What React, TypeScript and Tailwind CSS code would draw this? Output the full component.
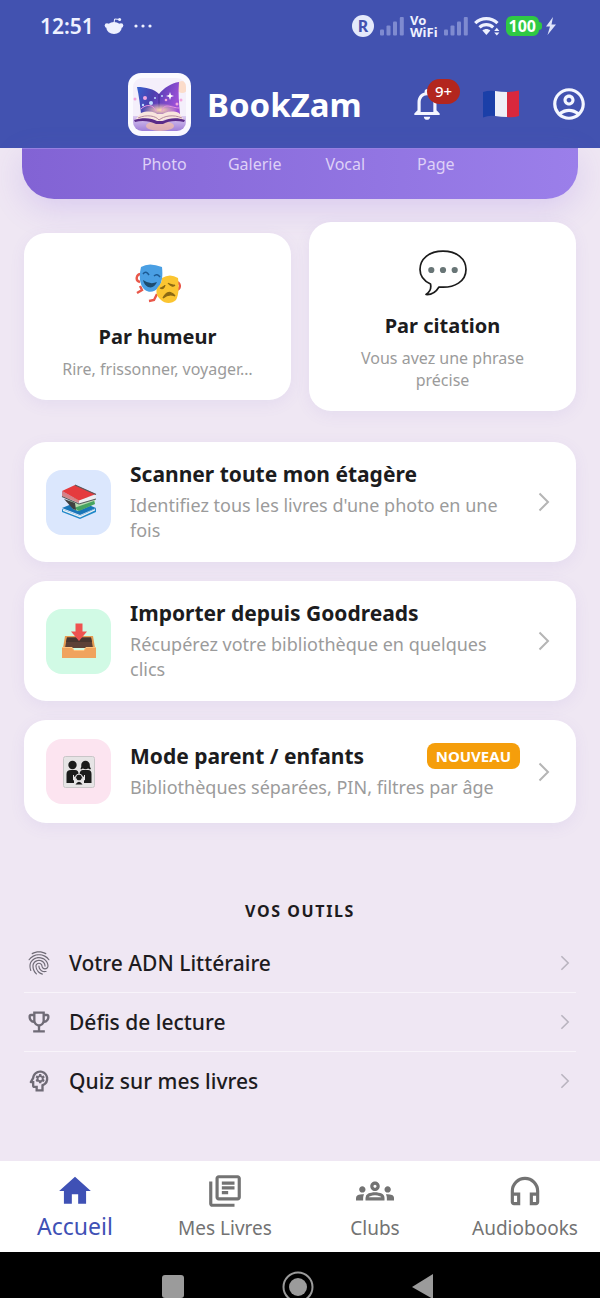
import type { ReactNode } from "react";
import {
  MdFingerprint,
  MdHome,
  MdOutlineAccountCircle,
  MdOutlineEmojiEvents,
  MdOutlineGroups,
  MdOutlineHeadphones,
  MdOutlineLibraryBooks,
  MdOutlineNotifications,
  MdOutlinePsychology,
} from "react-icons/md";

function RedditIcon() {
  return (
    <svg viewBox="0 0 20 18" className="h-[18px] w-5" aria-hidden="true">
      <ellipse cx="10" cy="11" rx="7.6" ry="6" fill="#eef1ff" />
      <circle cx="3" cy="8.6" r="2.3" fill="#eef1ff" />
      <circle cx="17" cy="8.6" r="2.3" fill="#eef1ff" />
      <path d="M10 6 L10.6 2 L15 2.4" fill="none" stroke="#eef1ff" strokeWidth="1" />
      <circle cx="15.6" cy="2.4" r="1.5" fill="#eef1ff" />
    </svg>
  );
}

function SignalBars() {
  return (
    <svg viewBox="0 0 24 20" className="h-5 w-6" fill="#7f8bd0" aria-hidden="true">
      <rect x="0" y="13.500" width="4" height="6" rx="1" />
      <rect x="6.500" y="9.500" width="4" height="10" rx="1" />
      <rect x="13" y="5.500" width="4" height="14" rx="1" />
      <rect x="19.800" y="1" width="4" height="18.500" rx="1" />
    </svg>
  );
}

function WifiIcon() {
  return (
    <svg viewBox="0 0 26 20" className="h-5 w-[26px]" aria-hidden="true">
      <g fill="none" stroke="#eef1ff" strokeWidth="3.200">
        <path d="M1.200 7.200 C7.500 1 17 1 23.500 7.200" />
        <path d="M5.500 11.400 C9.500 7.600 15.200 7.600 19.200 11.400" />
      </g>
      <path d="M8.400 14.600 C10.800 12.600 14 12.600 16.300 14.600 L12.400 19 Z" fill="#eef1ff" />
      <path d="M20.200 15 L22.800 11.800 L25.400 15 Z M20.200 16.500 L22.800 19.600 L25.400 16.500 Z" fill="#eef1ff" />
    </svg>
  );
}

function BatteryBadge() {
  return (
    <span className="flex items-center">
      <span className="flex h-5 items-center rounded-md bg-[#2fc944] px-[3px] text-base leading-none font-bold text-white">
        100
      </span>
      <span className="h-2 w-[3px] rounded-r-sm bg-[#2fc944]" />
      <svg viewBox="0 0 10 18" className="ml-1 h-[18px] w-2.5" aria-hidden="true">
        <path d="M7 0 L0 9.500 H4 L1.500 18 L10 7.500 H5.500 Z" fill="#dfe4fa" />
      </svg>
    </span>
  );
}

function StatusBar() {
  return (
    <div className="flex h-[52px] items-center justify-between pr-11 pl-10 text-[#eef1ff]">
      <div className="flex items-center gap-2.5">
        <span className="text-[21px] leading-6 font-semibold">12:51</span>
        <RedditIcon />
        <svg viewBox="0 0 18 4" className="h-1 w-[18px]" fill="#eef1ff" aria-hidden="true">
          <circle cx="2" cy="2" r="1.600" />
          <circle cx="9" cy="2" r="1.600" />
          <circle cx="16" cy="2" r="1.600" />
        </svg>
      </div>
      <div className="flex items-center gap-1.5">
        <span className="flex size-[22px] items-center justify-center rounded-full bg-[#e4e9fb] text-base leading-none font-bold text-[#4252b0]">
          R
        </span>
        <SignalBars />
        <span className="flex flex-col text-[13px] leading-3 font-bold">
          <span>Vo</span>
          <span>WiFi</span>
        </span>
        <SignalBars />
        <WifiIcon />
        <BatteryBadge />
      </div>
    </div>
  );
}

function BookLogo() {
  return (
    <span className="block size-[63px] rounded-[13px] bg-[#fbfaff] p-[5px]">
      <svg viewBox="0 0 53 53" className="size-full" aria-hidden="true">
        <defs>
          <linearGradient id="cover" x1="0" x2="1" y1="0" y2="0.300">
            <stop offset="0" stopColor="#3565d2" />
            <stop offset="0.450" stopColor="#4c3fae" />
            <stop offset="0.550" stopColor="#5c40b8" />
            <stop offset="1" stopColor="#9a4fd6" />
          </linearGradient>
          <linearGradient id="table" x1="0" x2="0" y1="0" y2="1">
            <stop offset="0" stopColor="#dccbf0" />
            <stop offset="1" stopColor="#a07fd8" />
          </linearGradient>
          <radialGradient id="glow">
            <stop offset="0" stopColor="#ffd9b0" />
            <stop offset="1" stopColor="#ffd9b0" stopOpacity="0" />
          </radialGradient>
          <clipPath id="tile">
            <rect width="53" height="53" rx="9" />
          </clipPath>
        </defs>
        <g clipPath="url(#tile)">
          <rect width="53" height="53" fill="#f4effb" />
          <circle cx="49" cy="9" r="6" fill="#fbdccb" />
          <rect y="38" width="53" height="15" fill="url(#table)" />
          <ellipse cx="27" cy="48" rx="14" ry="5" fill="#f6bfa5" opacity="0.700" />
          <path d="M4 9 C13 9 21 11 26 16 C31 10 38 5 46 4 C45 15 46 25 47 36 H8 C7 27 6 18 4 9Z" fill="url(#cover)" />
          <path d="M26 16 V34" stroke="#332b88" strokeWidth="0.800" />
          <ellipse cx="27" cy="32" rx="18" ry="7" fill="url(#glow)" />
          <path d="M8 31 C13 26 20 26 23 33 M46 30 C39 30 31 24 29 33" fill="none" stroke="#e894e0" strokeWidth="1" />
          <g fill="#f2a5df">
            <circle cx="12" cy="20" r="2" />
            <circle cx="44" cy="26" r="1.500" />
            <circle cx="33" cy="22" r="1.300" />
            <circle cx="2" cy="21" r="1.500" />
            <circle cx="48" cy="22" r="1.500" />
          </g>
          <g fill="#bcdcff">
            <circle cx="18" cy="25" r="2" />
            <circle cx="10" cy="27" r="1.200" />
            <circle cx="22" cy="20" r="1" />
            <circle cx="29" cy="18" r="1" />
          </g>
          <path d="M37 14 L38 17 L41 18 L38 19 L37 22 L36 19 L33 18 L36 17Z" fill="#fff" />
          <path d="M2 42 L8 35 C16 32 23 34 27 38 C31 34 39 32 46 35 L51 42 C43 40 34 40 29 43 H24 C18 40 10 40 2 42Z" fill="#f8e5dd" />
          <path d="M5 40 C14 36 23 38 26 42 C31 38 40 36 49 40" fill="none" stroke="#b58a9f" strokeWidth="1" />
          <path d="M1 42 C10 39 19 40 24 43 H30 C36 40 44 39 52 42 L51 44 C43 42 35 43 30 46 H23 C17 43 9 42 2 44Z" fill="#5a2b88" />
        </g>
      </svg>
    </span>
  );
}

function FrenchFlag() {
  return (
    <svg viewBox="0 0 38 28" className="h-7 w-[38px]" aria-hidden="true">
      <path d="M1 2 Q7 0 13 1 V26 Q7 25 1 27.500Z" fill="#1b3fa8" />
      <path d="M13 1 Q19 2 25 2 V27 Q19 27 13 26Z" fill="#eef0f8" />
      <path d="M25 2 Q31 2 37 .5 V26 Q31 28 25 27Z" fill="#d8283d" />
    </svg>
  );
}

function Header() {
  return (
    <header className="h-[148px] bg-[#4252b0]">
      <StatusBar />
      <div className="flex h-[104px] items-center justify-between pr-3 pl-32">
        <a href="#accueil" className="flex items-center gap-4">
          <BookLogo />
          <h1 className="text-[33px] leading-none font-bold text-white">BookZam</h1>
        </a>
        <div className="flex items-center gap-[30px]">
          <button type="button" aria-label="Notifications" className="relative mr-1.5 text-[#f4f6ff]">
            <MdOutlineNotifications className="size-[38px]" />
            <span className="absolute -top-1.5 left-[19px] flex h-[25px] w-[33px] items-center justify-center rounded-full bg-[#b3261e] text-[15px] leading-none font-medium text-white">
              9+
            </span>
          </button>
          <button type="button" aria-label="Français">
            <FrenchFlag />
          </button>
          <button type="button" aria-label="Compte" className="text-[#f4f6ff]">
            <MdOutlineAccountCircle className="size-[38px]" />
          </button>
        </div>
      </div>
    </header>
  );
}

function MasksArt() {
  return (
    <svg viewBox="0 0 46 40" className="h-10 w-[46px]" aria-hidden="true">
      <path d="M6 10 C1 10 0 17 5 18 M5 22 L7 26 L2 29 M40 18 C46 18 46 24 42 26 M22 30 L19 36 L14 37" fill="none" stroke="#e9584a" strokeWidth="2.400" />
      <path d="M6 3 Q14 -2 27 3 C28 12 27 20 23 24 C20 28 14 29 10 26 C4 21 4 11 6 3Z" fill="#4a9fe3" />
      <path d="M8 10 Q11 6 14 11 M19 12 Q22 9 25 13" fill="none" stroke="#1c5a93" strokeWidth="1.500" />
      <path d="M8 16 Q15 21 22 18 Q19 25 13 23 Q9 21 8 16Z" fill="#1d4c70" />
      <path d="M27 14 Q35 9 43 14 C44 22 44 31 41 36 C37 40 30 40 26 36 C20 31 21 25 23 23 C26 20 27 17 27 14Z" fill="#fbc531" />
      <path d="M25 24 Q29 26 30 21 M33 19 Q37 24 40 21 M28 34 Q33 24 40 32 Q34 29 28 34Z" fill="#8b6914" stroke="#8b6914" strokeWidth="1.200" />
    </svg>
  );
}

function BubbleArt() {
  return (
    <svg viewBox="0 0 48 46" className="h-[46px] w-12" aria-hidden="true">
      <path
        d="M11.500 34 C5 31 1 26 1 19.500 C1 9 10 1.200 24 1.200 C38 1.200 47 9 47 19.500 C47 31 36 38.500 20 37 C17 42 13 45 7 44.500 C11 42 12.500 38.500 11.500 34Z"
        fill="#fff"
        stroke="#1b1b1b"
        strokeWidth="1.700"
        strokeLinejoin="round"
      />
      <g fill="#687576">
        <circle cx="12.300" cy="20" r="3.100" />
        <circle cx="24" cy="20" r="3.100" />
        <circle cx="35.700" cy="20" r="3.100" />
      </g>
    </svg>
  );
}

function BooksArt() {
  return (
    <svg viewBox="0 0 36 36" className="size-9" aria-hidden="true">
      <path d="M1 25 L19 32 L35 24 V28 L19 35 L1 28Z" fill="#1e88c9" />
      <path d="M2 25.500 L19 32 L34 25 V26.500 L19 33.500 L2 27Z" fill="#eceff1" />
      <path d="M1 24 L18 17 L35 24 L19 31Z" fill="#1976b8" />
      <path d="M7 17 L12 25 L17 27 L34 20 V15 L17 12Z" fill="#b8dcae" />
      <path d="M13 24 L33 17 L34 20 L18 27Z" fill="#47a461" />
      <path d="M3 15 L12 25 L15 26 L14 19Z" fill="#414141" />
      <path d="M1 9 L17 16 L35 11 V15 L18 20 L2 13Z" fill="#eceff1" />
      <path d="M1 7 L14 1 L35 10 L18 16.500Z" fill="#e53b3e" />
      <path d="M14 1 L35 10.500 M1 12.500 L18 20 L35 15" fill="none" stroke="#565a5d" strokeWidth="1.100" />
      <path d="M1 7 V12 L18 19 V16.500Z" fill="#c7292f" opacity="0.550" />
    </svg>
  );
}

function InboxArt() {
  return (
    <svg viewBox="0 0 36 36" className="size-9" aria-hidden="true">
      <path d="M4 13 H32 L34 25 H2Z" fill="#e59b52" />
      <path d="M6 14.500 H30 L32 25 H4Z" fill="#5d4037" />
      <path d="M6 14.500 H30 L31 19 H5Z" fill="#49352f" />
      <path d="M1 24 H11 L13 27 H23 L25 24 H35 V35 H1Z" fill="#f0a35e" />
      <path d="M1 24.500 H11 L13 27.500 H23 L25 24.500 H35" fill="none" stroke="#ffc27d" />
      <path d="M14.500 .5 H21.500 V8.500 H26 L18 18 L10 8.500 H14.500Z" fill="#ef5350" />
    </svg>
  );
}

function FamilyArt() {
  return (
    <svg viewBox="0 0 32 32" className="size-8" aria-hidden="true">
      <rect x="0.500" y="0.500" width="31" height="31" rx="2" fill="#e6e4e5" stroke="#c9c6c8" />
      <g fill="#1b1b1b">
        <circle cx="9.500" cy="9" r="4.200" />
        <path d="M3.500 27 V18 Q3.500 14 8 14 H12 Q15.500 14 15.500 18 L11 21 V27Z" />
        <circle cx="22.500" cy="9" r="4.200" />
        <path d="M17.500 13 Q19 9 19 7 H26 Q26 9 28 13 Q26 14 25 12 H20 Q19 14 17.500 13Z" />
        <path d="M16.500 18 Q17 14 20 14 H25 Q28.500 14 28.500 18 V27 H21 V21Z" />
      </g>
      <circle cx="16" cy="21.500" r="3.400" fill="#1b1b1b" stroke="#e6e4e5" />
      <path d="M10.500 19 V24 H14 M21.500 19 V24 H18" fill="none" stroke="#e6e4e5" />
      <path d="M12.500 28.500 Q16 23 19.500 28.500Z" fill="#1b1b1b" />
    </svg>
  );
}

function Chevron({ className }: { className: string }) {
  return (
    <svg viewBox="0 0 12 20" className={className} aria-hidden="true">
      <path d="M1.500 1.500 L10 10 L1.500 18.500" fill="none" stroke="currentColor" strokeWidth="2" />
    </svg>
  );
}

function SearchCard({ art, title, text }: { art: ReactNode; title: string; text: string }) {
  return (
    <a
      href="#recherche"
      className="flex flex-1 flex-col items-center rounded-[22px] bg-white px-6 pt-7 pb-5 text-center shadow-[0_4px_16px_rgba(110,90,210,0.08)]"
    >
      <span className="flex h-[46px] items-center">{art}</span>
      <span className="mt-4 text-xl leading-7 font-bold text-[#1c1c1e]">{title}</span>
      <span className="mt-[7px] text-base leading-[22px] text-[#9b9b9b]">{text}</span>
    </a>
  );
}

function FeatureRow({
  art,
  tile,
  title,
  text,
  badge,
}: {
  art: ReactNode;
  tile: string;
  title: string;
  text: string;
  badge?: string;
}) {
  return (
    <a
      href="#fonction"
      className="flex items-center rounded-[22px] bg-white py-[19px] pr-[26px] pl-[22px] shadow-[0_4px_16px_rgba(110,90,210,0.08)]"
    >
      <span className={`flex size-[65px] shrink-0 items-center justify-center rounded-2xl ${tile}`}>{art}</span>
      <span className="ml-[19px] flex min-w-0 flex-1 flex-col gap-1.5">
        <span className="flex h-[26px] items-center justify-between">
          <span className="text-[21px] leading-[26px] font-bold text-[#1c1c1e]">{title}</span>
          {badge && (
            <span className="rounded-lg bg-[#f59e0b] px-[9px] text-[15px] leading-[26px] font-bold text-white">
              {badge}
            </span>
          )}
        </span>
        <span className="text-lg leading-[25px] text-[#9b9b9b]">{text}</span>
      </span>
      <Chevron className="ml-[18px] h-5 w-3 shrink-0 text-[#b5b5b5]" />
    </a>
  );
}

const tools = [
  { icon: MdFingerprint, label: "Votre ADN Littéraire" },
  { icon: MdOutlineEmojiEvents, label: "Défis de lecture" },
  { icon: MdOutlinePsychology, label: "Quiz sur mes livres" },
];

const tabs = [
  { icon: MdHome, label: "Accueil", active: true },
  { icon: MdOutlineLibraryBooks, label: "Mes Livres", active: false },
  { icon: MdOutlineGroups, label: "Clubs", active: false },
  { icon: MdOutlineHeadphones, label: "Audiobooks", active: false },
];

export default function App() {
  return (
    <div className="flex min-h-screen flex-col bg-[#efe7f3] font-['Noto_Sans',sans-serif]">
      <Header />
      <main className="flex flex-1 flex-col">
        <section className="mx-[22px] rounded-b-[32px] border-t border-[#9780e0] bg-linear-to-r from-[#8263d4] to-[#9b7fea] pt-1 pb-6 shadow-[0_10px_32px_rgba(124,77,220,0.18)]">
          <div className="mx-auto grid w-[362px] grid-cols-4 text-center text-base leading-[22px] text-[#ded0f7]">
            <span>Photo</span>
            <span>Galerie</span>
            <span>Vocal</span>
            <span>Page</span>
          </div>
        </section>

        <div className="mt-[23px] flex items-center gap-[18px] px-6">
          <SearchCard art={<MasksArt />} title="Par humeur" text="Rire, frissonner, voyager…" />
          <SearchCard art={<BubbleArt />} title="Par citation" text="Vous avez une phrase précise" />
        </div>

        <div className="mt-[31px] flex flex-col gap-[19px] px-6">
          <FeatureRow
            art={<BooksArt />}
            tile="bg-[#dbe7fd]"
            title="Scanner toute mon étagère"
            text="Identifiez tous les livres d'une photo en une fois"
          />
          <FeatureRow
            art={<InboxArt />}
            tile="bg-[#d1fae5]"
            title="Importer depuis Goodreads"
            text="Récupérez votre bibliothèque en quelques clics"
          />
          <FeatureRow
            art={<FamilyArt />}
            tile="bg-[#fce4f0]"
            title="Mode parent / enfants"
            text="Bibliothèques séparées, PIN, filtres par âge"
            badge="NOUVEAU"
          />
        </div>

        <section className="mt-[76px] px-6">
          <h2 className="text-center text-base leading-6 font-bold tracking-widest text-[#1d1b20]">VOS OUTILS</h2>
          <ul className="mt-[11px] divide-y divide-[#f8f4fa]">
            {tools.map(({ icon: Icon, label }) => (
              <li key={label}>
                <a href="#outil" className="flex h-[58px] items-center pr-1.5 pl-px text-[#1d1b20]">
                  <Icon className="size-7 text-[#6f6b76]" />
                  <span className="ml-4 flex-1 text-[21px] leading-7 font-medium">{label}</span>
                  <Chevron className="h-4 w-2.5 text-[#b9b4bf]" />
                </a>
              </li>
            ))}
          </ul>
        </section>
      </main>

      <nav className="grid h-[91px] grid-cols-4 bg-white">
        {tabs.map(({ icon: Icon, label, active }) => (
          <a
            key={label}
            href="#onglet"
            className={
              active
                ? "flex flex-col items-center pt-[11px] text-[23px] leading-8 text-[#3f51b5]"
                : "flex flex-col items-center pt-[11px] text-[19px] leading-9 text-[#737373]"
            }
          >
            <Icon className="size-[38px]" />
            <span className="whitespace-nowrap">{label}</span>
          </a>
        ))}
      </nav>

      <div className="flex h-[46px] justify-center gap-[93px] overflow-hidden bg-black pt-[19px] pr-[5px]">
        <button type="button" aria-label="Récents" className="size-8 shrink-0">
          <svg viewBox="0 0 32 32" className="size-8">
            <rect x="5" y="4" width="22" height="23" rx="3" fill="#9b9b9b" />
          </svg>
        </button>
        <button type="button" aria-label="Écran d'accueil" className="size-8 shrink-0">
          <svg viewBox="0 0 32 32" className="size-8">
            <circle cx="16" cy="16" r="14.500" fill="none" stroke="#9b9b9b" strokeWidth="2" />
            <circle cx="16" cy="16" r="9" fill="#9b9b9b" />
          </svg>
        </button>
        <button type="button" aria-label="Retour" className="size-8 shrink-0">
          <svg viewBox="0 0 32 32" className="size-8">
            <path d="M26 3 V28 L5 16Z" fill="#9b9b9b" />
          </svg>
        </button>
      </div>
    </div>
  );
}
